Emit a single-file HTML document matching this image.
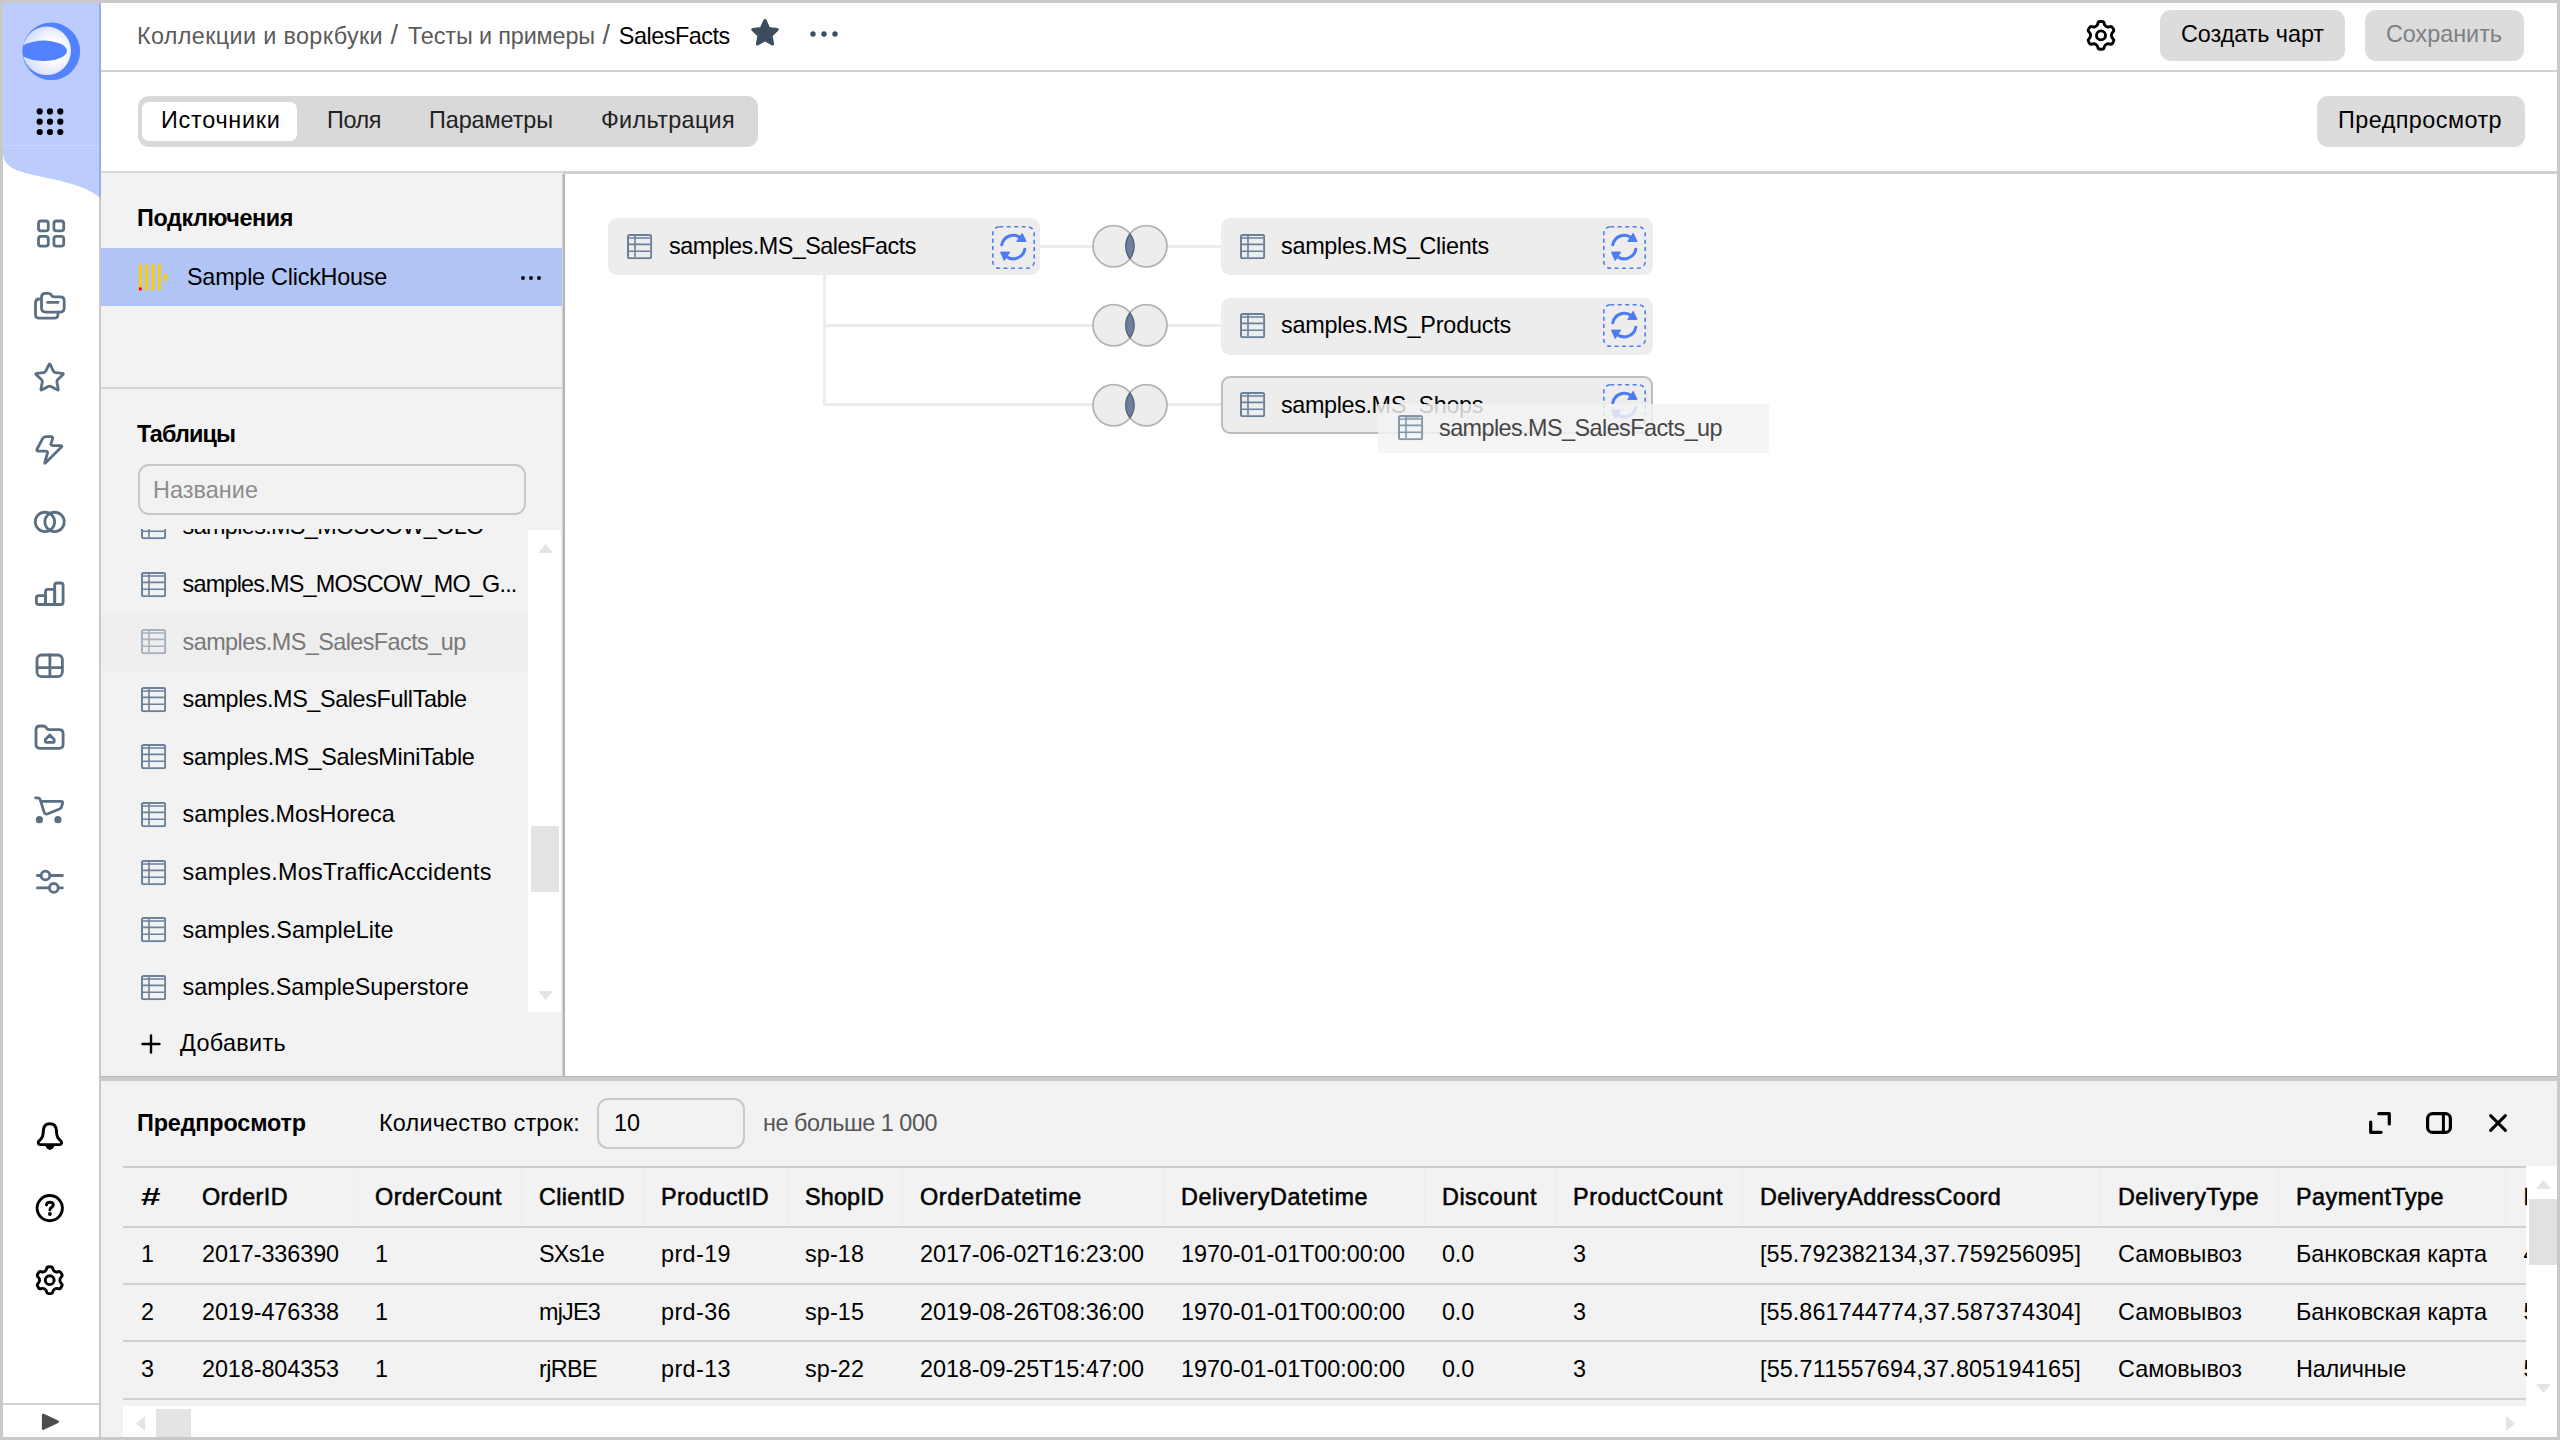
<!DOCTYPE html>
<html lang="ru">
<head>
<meta charset="utf-8">
<title>SalesFacts</title>
<style>
*{box-sizing:border-box;margin:0;padding:0}
html,body{width:2560px;height:1440px;overflow:hidden;background:#c9c9c9}
body{font-family:"Liberation Sans",sans-serif;font-size:23.4px;color:#000;position:relative}
.a{position:absolute}
.t{position:absolute;white-space:nowrap;line-height:30px;height:30px}
.b{font-weight:700}
.m{-webkit-text-stroke:0.55px #000}
.g{color:#5b5b5b}
svg{position:absolute;overflow:visible}
#aside{left:3px;top:3px;width:98px;height:1434px;background:#fff;border-right:2px solid #c9c9c9}
.si{left:34px;width:32px;height:32px;fill:none;stroke:#5b6f83;stroke-width:1.5;stroke-linecap:round;stroke-linejoin:round}
.sb{left:34px;width:32px;height:32px;fill:none;stroke:#000;stroke-width:1.5;stroke-linecap:round;stroke-linejoin:round}
.btn{background:#dcdcdc;border-radius:11px;height:51px}
.card{height:57px;width:432px;background:#ededed;border-radius:9px}
.ln{background:#ececec}
.hl{height:2px;background:#d1d1d1;left:123px;width:2403px}
.ti{width:25.2px;height:25.2px}
.rf{width:43px;height:43px}
</style>
</head>
<body>

<svg class="a" style="width:0;height:0;left:0;top:0"><defs>
  <symbol id="tbl" viewBox="0 0 25.2 25.2"><rect x="1" y="1" width="23.2" height="23.2" rx="1.6" fill="none" stroke="#6a8199" stroke-width="2"/><path d="M2 3.9H23.2" stroke="#6a8199" stroke-width="1.5" fill="none"/><path d="M8 2V23.2M2 10.4H23.2M2 17.3H23.2" stroke="#6a8199" stroke-width="1.6" fill="none"/></symbol>
  <symbol id="rfr" viewBox="0 0 43 43"><rect x="0.8" y="0.8" width="41.4" height="41.4" rx="6.5" fill="none" stroke="#4f7df0" stroke-width="1.6" stroke-dasharray="4 3.45"/><g fill="none" stroke="#4d7cf0" stroke-width="3.1" stroke-linecap="round"><path d="M9.8 18.8A11.7 11.7 0 0 1 28.7 12"/><path d="M32.8 23.2A11.7 11.7 0 0 1 13.7 30"/></g><path d="M30.2 7.3L34.1 15.4H24.7Z" fill="#4d7cf0" stroke="#4d7cf0" stroke-width="1" stroke-linejoin="round"/><path d="M12.2 34.5L8.5 26.1H17.8Z" fill="#4d7cf0" stroke="#4d7cf0" stroke-width="1" stroke-linejoin="round"/></symbol>
  <symbol id="venn" viewBox="0 0 78 46"><circle cx="22.6" cy="23.3" r="20.6" fill="#ededed" stroke="#b3b3b3" stroke-width="1.8"/><circle cx="55.4" cy="23.3" r="20.6" fill="#ededed" stroke="#b3b3b3" stroke-width="1.8"/><path d="M39 10.8A20.6 20.6 0 0 1 39 35.8A20.6 20.6 0 0 1 39 10.8Z" fill="#6b8199" stroke="#4c6078" stroke-width="1.2"/></symbol>
</defs></svg>

<!-- SIDEBAR -->
<div class="a" id="aside"></div>
<svg class="a" style="left:0;top:0;width:101px;height:1440px" viewBox="0 0 101 1440">
<path d="M3 3H99V197C86 186 62 181 38 176C14 171 3 166 3 152Z" fill="#bbccfd"/>
<rect x="3" y="145" width="96" height="1" fill="#c9d6fb"/>
<rect x="99" y="3" width="2" height="194" fill="#9eadd8"/>
<defs>
<radialGradient id="lg" cx="0.62" cy="0.5" r="0.62"><stop offset="0.35" stop-color="#fff"/><stop offset="1" stop-color="#cfdafe"/></radialGradient>
<clipPath id="lc"><circle cx="51.3" cy="51.3" r="28.8"/></clipPath>
</defs>
<circle cx="51.3" cy="51.3" r="28.8" fill="#5282ff"/>
<g clip-path="url(#lc)"><circle cx="46.8" cy="50.8" r="24.2" fill="url(#lg)"/><ellipse cx="43.5" cy="50.8" rx="23.5" ry="10.2" fill="#5282ff"/></g>
<g fill="#000"><circle cx="39.7" cy="111.4" r="3.1"/><circle cx="50" cy="111.4" r="3.1"/><circle cx="60.3" cy="111.4" r="3.1"/><circle cx="39.7" cy="121.7" r="3.1"/><circle cx="50" cy="121.7" r="3.1"/><circle cx="60.3" cy="121.7" r="3.1"/><circle cx="39.7" cy="132" r="3.1"/><circle cx="50" cy="132" r="3.1"/><circle cx="60.3" cy="132" r="3.1"/></g>
<g fill="none" stroke="#5b6f83" stroke-width="2.8" stroke-linecap="round" stroke-linejoin="round">
<rect x="38.5" y="221" width="9.8" height="9.8" rx="2.4"/>
<rect x="38.5" y="236.4" width="9.8" height="9.8" rx="2.4"/>
<rect x="53.9" y="221" width="9.8" height="9.8" rx="2.4"/>
<rect x="53.9" y="236.4" width="9.8" height="9.8" rx="2.4"/>
<path d="M41.5 308.1V297.3Q41.5 293.3 45.5 293.3H48.3Q50 293.3 51 294.6L52 295.9Q52.8 296.9 54.2 296.9H60.2Q64.2 296.9 64.2 300.9V308.1Q64.2 312.1 60.2 312.1H45.5Q41.5 312.1 41.5 308.1Z"/>
<path d="M41.5 299H39.5Q35.5 299 35.5 303V314.2Q35.5 318.2 39.5 318.2H54Q58 318.2 58 314.2V312.1"/>
<path d="M47.6 302.4H58"/>
<path d="M48.92 364.55Q49.60 363.10 50.28 364.55L53.27 370.87Q53.95 372.31 55.54 372.52L62.47 373.40Q64.06 373.60 62.89 374.70L57.80 379.49Q56.64 380.59 56.94 382.16L58.24 389.03Q58.53 390.60 57.13 389.83L51.00 386.47Q49.60 385.70 48.20 386.47L42.07 389.83Q40.67 390.60 40.96 389.03L42.26 382.16Q42.56 380.59 41.40 379.49L36.31 374.70Q35.14 373.60 36.73 373.40L43.66 372.52Q45.25 372.31 45.93 370.87Z"/>
<path d="M42.48 438.82Q43.60 436.70 46.00 436.70L50.90 436.70Q53.30 436.70 52.53 438.97L51.07 443.33Q50.30 445.60 52.70 445.60L60.50 445.60Q62.90 445.60 61.20 447.30L45.90 462.60Q44.20 464.30 44.88 462.00L47.42 453.40Q48.10 451.10 45.70 451.10L38.40 451.10Q36.00 451.10 37.12 448.98Z"/>
<circle cx="44.95" cy="521.9" r="9.65"/><circle cx="54.55" cy="521.9" r="9.65"/>
<path d="M36.4 598Q36.4 595.7 38.7 595.7H45.5V604.5H38.7Q36.4 604.5 36.4 602.2Z"/>
<path d="M45.5 591.7Q45.5 589.4 47.8 589.4H54.7V604.5H45.5Z"/>
<path d="M54.7 585.3Q54.7 583 57 583H60.8Q63.1 583 63.1 585.3V602.2Q63.1 604.5 60.8 604.5H54.7Z"/>
<rect x="37" y="655" width="25.35" height="21.7" rx="4.6"/><path d="M49.9 655V676.7M37 667.6H62.35"/>
<path d="M36 744.3V730Q36 726 40 726H43.2Q44.9 726 45.9 727.3L46.9 728.6Q47.7 729.6 49.1 729.6H59.1Q63.1 729.6 63.1 733.6V744.3Q63.1 748.3 59.1 748.3H40Q36 748.3 36 744.3Z"/>
<path d="M49.8 734.9L45.4 739.4V741.4Q45.4 742.4 46.4 742.4H53.2Q54.2 742.4 54.2 741.4V739.4Z"/>
<path d="M35.5 797.8H37.5Q39.6 797.8 40.3 799.9L44 811.8Q45 814.9 47.9 813.8L59.5 809Q61.2 808.2 61.7 806.5L62.5 803.4Q63.1 801.4 61.1 801.4H41.2"/>
<circle cx="39.4" cy="819.7" r="2.2" fill="#5b6f83"/><circle cx="57.9" cy="819.7" r="2.2" fill="#5b6f83"/>
<circle cx="45.5" cy="875.5" r="4.4"/><circle cx="53.8" cy="887.9" r="4.4"/>
<path d="M37.4 875.5H41M50 875.5H62.4M37.4 887.9H49.3M58.3 887.9H62.4"/>
</g>
<g fill="none" stroke="#000" stroke-width="2.9" stroke-linecap="round" stroke-linejoin="round">
<path d="M49.9 1123.7C45.5 1123.7 43.6 1127 43.4 1130.5L43 1134.5C42.8 1136.5 42 1138 40.5 1139.5L38.8 1141.3C37.5 1142.7 38.4 1144.6 40.2 1144.6H59.6C61.4 1144.6 62.3 1142.7 61 1141.3L59.3 1139.5C57.8 1138 57 1136.5 56.8 1134.5L56.4 1130.5C56.2 1127 54.3 1123.7 49.9 1123.7Z"/>
<path d="M47.2 1146.4Q49.9 1150.6 52.6 1146.4Z" fill="#000"/>
<circle cx="49.75" cy="1208.1" r="12.65"/>
<path d="M46.5 1205.1C46.5 1203.3 48 1202.3 49.9 1202.3C51.8 1202.3 53.3 1203.4 53.3 1205C53.3 1207.3 49.9 1207.3 49.9 1210"/>
<circle cx="49.9" cy="1214" r="1.9" fill="#000" stroke="none"/>
<path d="M54.70 1271.37Q53.22 1270.52 52.82 1268.87L52.71 1268.40Q52.31 1266.75 50.61 1266.75L48.79 1266.75Q47.09 1266.75 46.69 1268.40L46.58 1268.87Q46.18 1270.52 44.70 1271.37L44.55 1271.46Q43.08 1272.31 41.45 1271.83L40.99 1271.69Q39.36 1271.21 38.51 1272.68L37.60 1274.27Q36.75 1275.74 37.98 1276.91L38.32 1277.24Q39.56 1278.41 39.56 1280.11L39.56 1280.29Q39.56 1281.99 38.32 1283.16L37.98 1283.49Q36.75 1284.66 37.60 1286.13L38.51 1287.72Q39.36 1289.19 40.99 1288.71L41.45 1288.57Q43.08 1288.09 44.55 1288.94L44.70 1289.03Q46.18 1289.88 46.58 1291.53L46.69 1292.00Q47.09 1293.65 48.79 1293.65L50.61 1293.65Q52.31 1293.65 52.71 1292.00L52.82 1291.53Q53.22 1289.88 54.70 1289.03L54.85 1288.94Q56.32 1288.09 57.95 1288.57L58.41 1288.71Q60.04 1289.19 60.89 1287.72L61.80 1286.13Q62.65 1284.66 61.42 1283.49L61.08 1283.16Q59.84 1281.99 59.84 1280.29L59.84 1280.11Q59.84 1278.41 61.08 1277.24L61.42 1276.91Q62.65 1275.74 61.80 1274.27L60.89 1272.68Q60.04 1271.21 58.41 1271.69L57.95 1271.83Q56.32 1272.31 54.85 1271.46Z"/><circle cx="49.7" cy="1280.2" r="4.4"/>
</g>
<rect x="3" y="1403" width="96" height="2" fill="#d3d3d3"/>
<path d="M43.2 1415L57.6 1421.8L43.2 1428.6Z" fill="#4d4d4d" stroke="#4d4d4d" stroke-width="2.6" stroke-linejoin="round"/>
</svg>

<!-- TOPBAR -->
<div class="a" style="left:101px;top:3px;width:2456px;height:67px;background:#fff"></div>
<div class="a" style="left:101px;top:70px;width:2456px;height:2px;background:#d2d2d2"></div>
<svg class="a" style="left:748.7px;top:16.6px;width:32px;height:32px" viewBox="0 0 16 16"><path d="M8 1.9L9.8 5.8L14 6.3L10.9 9.2L11.7 13.4L8 11.3L4.3 13.4L5.1 9.2L2 6.3L6.2 5.8Z" fill="#3d4c5f" stroke="#3d4c5f" stroke-width="1.7" stroke-linejoin="round"/></svg>
<svg class="a" style="left:808px;top:28px;width:32px;height:12px" viewBox="0 0 32 12"><g fill="#3d4c5f"><circle cx="5" cy="6" r="2.7"/><circle cx="16" cy="6" r="2.7"/><circle cx="27" cy="6" r="2.7"/></g></svg>
<svg class="a" style="left:0;top:0;width:2560px;height:72px;fill:none;stroke:#000;stroke-width:2.9;stroke-linejoin:round" viewBox="0 0 2560 72"><path d="M2106.10 26.29Q2104.63 25.44 2104.23 23.79L2104.09 23.21Q2103.69 21.56 2101.99 21.56L2100.01 21.56Q2098.31 21.56 2097.91 23.21L2097.77 23.79Q2097.37 25.44 2095.90 26.29L2095.66 26.43Q2094.19 27.28 2092.56 26.80L2091.99 26.63Q2090.36 26.15 2089.51 27.62L2088.52 29.34Q2087.67 30.81 2088.90 31.98L2089.33 32.39Q2090.56 33.56 2090.56 35.26L2090.56 35.54Q2090.56 37.24 2089.33 38.41L2088.90 38.82Q2087.67 39.99 2088.52 41.46L2089.51 43.18Q2090.36 44.65 2091.99 44.17L2092.56 44.00Q2094.19 43.52 2095.66 44.37L2095.90 44.51Q2097.37 45.36 2097.77 47.01L2097.91 47.59Q2098.31 49.24 2100.01 49.24L2101.99 49.24Q2103.69 49.24 2104.09 47.59L2104.23 47.01Q2104.63 45.36 2106.10 44.51L2106.34 44.37Q2107.81 43.52 2109.44 44.00L2110.01 44.17Q2111.64 44.65 2112.49 43.18L2113.48 41.46Q2114.33 39.99 2113.10 38.82L2112.67 38.41Q2111.44 37.24 2111.44 35.54L2111.44 35.26Q2111.44 33.56 2112.67 32.39L2113.10 31.98Q2114.33 30.81 2113.48 29.34L2112.49 27.62Q2111.64 26.15 2110.01 26.63L2109.44 26.80Q2107.81 27.28 2106.34 26.43Z"/><circle cx="2101" cy="35.4" r="4.5"/></svg>
<div class="a btn" style="left:2160px;top:9.7px;width:185px"></div>
<div class="a btn" style="left:2365px;top:9.7px;width:158.5px"></div>
<!-- TABBAR -->
<div class="a" style="left:101px;top:72px;width:2456px;height:99px;background:#fff"></div>
<div class="a" style="left:138px;top:96px;width:620px;height:51px;background:#d9d9d9;border-radius:11px"></div>
<div class="a" style="left:142px;top:102px;width:155px;height:39px;background:#fff;border-radius:7px"></div>
<div class="a btn" style="left:2317px;top:96px;width:208px"></div>
<div class="a" style="left:101px;top:171px;width:462px;height:2px;background:#d8d8d8"></div>
<div class="a" style="left:563px;top:171px;width:1994px;height:3px;background:#d0d0d0"></div>
<!-- LEFT PANEL -->
<div class="a" style="left:101px;top:173px;width:462px;height:904px;background:#f2f2f2"></div>
<div class="a" style="left:561px;top:174px;width:4px;height:903px;background:linear-gradient(90deg,#f2f2f2 0,#d6d6d6 40%,#b4b4b4 60%,#b4b4b4 100%)"></div>
<div class="a" style="left:101px;top:248px;width:461px;height:58px;background:#b1c4f6"></div>
<svg class="a" style="left:138px;top:264px;width:30px;height:27px" viewBox="0 0 30 27"><g fill="#fc0"><rect x="0.9" y="0.4" width="2.9" height="26"/><rect x="7.2" y="0.4" width="2.9" height="26"/><rect x="13.5" y="0.4" width="2.9" height="26"/><rect x="19.9" y="0.4" width="2.9" height="26"/><rect x="26.2" y="10" width="2.9" height="7"/></g><rect x="0.9" y="23.4" width="2.9" height="3" fill="#f00"/></svg>
<svg class="a" style="left:519px;top:272.7px;width:24px;height:10px" viewBox="0 0 24 10"><g fill="#000"><circle cx="4" cy="5" r="2"/><circle cx="12" cy="5" r="2"/><circle cx="20" cy="5" r="2"/></g></svg>
<div class="a" style="left:101px;top:386.5px;width:461px;height:2px;background:#d6d6d6"></div>

<!-- CANVAS -->
<div class="a" style="left:565px;top:174px;width:1992px;height:903px;background:#fff"></div>
<div class="a ln" style="left:1040px;top:245px;width:181px;height:3px"></div>
<div class="a ln" style="left:823px;top:275px;width:3px;height:131px"></div>
<div class="a ln" style="left:823px;top:324px;width:398px;height:3px"></div>
<div class="a ln" style="left:823px;top:403px;width:398px;height:3px"></div>
<div class="a card" style="left:608px;top:218px"></div>
<div class="a card" style="left:1221px;top:218px"></div>
<div class="a card" style="left:1221px;top:298px"></div>
<div class="a card" style="left:1221px;top:376px;height:58px;border:2px solid #bcbcbc"></div>
<svg class="a ti" style="left:627px;top:234px"><use href="#tbl"/></svg>
<svg class="a ti" style="left:1240px;top:234px"><use href="#tbl"/></svg>
<svg class="a ti" style="left:1240px;top:313px"><use href="#tbl"/></svg>
<svg class="a ti" style="left:1240px;top:392px"><use href="#tbl"/></svg>
<svg class="a rf" style="left:992px;top:226px"><use href="#rfr"/></svg>
<svg class="a rf" style="left:1603px;top:226px"><use href="#rfr"/></svg>
<svg class="a rf" style="left:1603px;top:304px"><use href="#rfr"/></svg>
<svg class="a rf" style="left:1603px;top:384px"><use href="#rfr"/></svg>
<svg class="a" style="left:1091px;top:223px;width:78px;height:46px"><use href="#venn"/></svg>
<svg class="a" style="left:1091px;top:302px;width:78px;height:46px"><use href="#venn"/></svg>
<svg class="a" style="left:1091px;top:382px;width:78px;height:46px"><use href="#venn"/></svg>

<!-- LEFT LIST -->
<div class="a" style="left:138px;top:464.4px;width:388px;height:51px;border:2px solid #c8c8c8;border-radius:11px"></div>
<div class="a" style="left:101px;top:613px;width:427px;height:58px;background:#eee"></div>
<div class="a" style="left:528px;top:530px;width:33px;height:482px;background:#fff"></div>
<div class="a" style="left:531px;top:826px;width:28px;height:66px;background:#e3e3e3"></div>
<svg class="a" style="left:538px;top:544px;width:15px;height:9px" viewBox="0 0 15 9"><path d="M0 9L7.5 0L15 9Z" fill="#e4e4e4"/></svg>
<svg class="a" style="left:538px;top:991px;width:15px;height:9px" viewBox="0 0 15 9"><path d="M0 0L7.5 9L15 0Z" fill="#e4e4e4"/></svg>
<svg class="a" style="left:141px;top:1034px;width:20px;height:20px;fill:none;stroke:#000;stroke-width:2.4;stroke-linecap:round" viewBox="0 0 20 20"><path d="M10 1.5V18.5M1.5 10H18.5"/></svg>

<div class="a" style="left:101px;top:528.5px;width:427px;height:483.5px;overflow:hidden">
<svg class="a ti" style="left:40px;top:-14.6px"><use href="#tbl"/></svg>
<span class="t" style="left:81.6px;top:-17.1px;letter-spacing:-0.645px;">samples.MS_MOSCOW_OLO</span>
<svg class="a ti" style="left:40px;top:43px"><use href="#tbl"/></svg>
<span class="t" style="left:81.6px;top:40.5px;letter-spacing:-0.781px;">samples.MS_MOSCOW_MO_G...</span>
<svg class="a ti" style="left:40px;top:100.6px;opacity:.55"><use href="#tbl"/></svg>
<span class="t" style="left:81.6px;top:98.1px;letter-spacing:-0.559px;color:#787878">samples.MS_SalesFacts_up</span>
<svg class="a ti" style="left:40px;top:158.2px"><use href="#tbl"/></svg>
<span class="t" style="left:81.6px;top:155.7px;letter-spacing:-0.393px;">samples.MS_SalesFullTable</span>
<svg class="a ti" style="left:40px;top:215.8px"><use href="#tbl"/></svg>
<span class="t" style="left:81.6px;top:213.3px;letter-spacing:-0.281px;">samples.MS_SalesMiniTable</span>
<svg class="a ti" style="left:40px;top:273.4px"><use href="#tbl"/></svg>
<span class="t" style="left:81.6px;top:270.9px;letter-spacing:-0.071px;">samples.MosHoreca</span>
<svg class="a ti" style="left:40px;top:331px"><use href="#tbl"/></svg>
<span class="t" style="left:81.6px;top:328.5px;letter-spacing:0.226px;">samples.MosTrafficAccidents</span>
<svg class="a ti" style="left:40px;top:388.6px"><use href="#tbl"/></svg>
<span class="t" style="left:81.6px;top:386.1px;letter-spacing:0.021px;">samples.SampleLite</span>
<svg class="a ti" style="left:40px;top:446.2px"><use href="#tbl"/></svg>
<span class="t" style="left:81.6px;top:443.7px;letter-spacing:-0.055px;">samples.SampleSuperstore</span>
</div>
<!-- BOTTOM PANEL -->
<div class="a" style="left:101px;top:1076px;width:2456px;height:5px;background:linear-gradient(180deg,#b9b9b9 0,#b9b9b9 25%,#cbcbcb 26%,#cbcbcb 100%)"></div>
<div class="a" style="left:101px;top:1081px;width:2456px;height:356px;background:#f2f2f2"></div>
<div class="a" style="left:597px;top:1097.6px;width:148.4px;height:51px;border:2px solid #c8c8c8;border-radius:11px"></div>
<svg class="a" style="left:2368px;top:1111px;width:24px;height:24px;fill:none;stroke:#000;stroke-width:3.2;stroke-linecap:round;stroke-linejoin:round" viewBox="0 0 24 24"><path d="M10.8 2.7H21.3V13"/><path d="M2.7 11V21.3H13"/></svg>
<svg class="a" style="left:2425px;top:1111px;width:28px;height:24px;fill:none;stroke:#000;stroke-width:3.2;stroke-linejoin:round" viewBox="0 0 28 24"><rect x="2.6" y="2.6" width="22.8" height="18.8" rx="5"/><path d="M18.4 2.6V21.4" stroke-width="3"/></svg>
<svg class="a" style="left:2488px;top:1113px;width:20px;height:20px;fill:none;stroke:#000;stroke-width:3;stroke-linecap:round" viewBox="0 0 20 20"><path d="M2.6 2.6L17.4 17.4M17.4 2.6L2.6 17.4"/></svg>
<!-- table lines -->
<div class="a hl" style="top:1166px;background:#cdcdcd"></div>
<div class="a hl" style="top:1225.6px"></div>
<div class="a hl" style="top:1283px"></div>
<div class="a hl" style="top:1340.4px"></div>
<div class="a hl" style="top:1398px"></div>
<div class="a" style="left:356.5px;top:1168px;width:1px;height:57px;background:#ededed"></div>
<div class="a" style="left:521px;top:1168px;width:1px;height:57px;background:#ededed"></div>
<div class="a" style="left:643px;top:1168px;width:1px;height:57px;background:#ededed"></div>
<div class="a" style="left:787px;top:1168px;width:1px;height:57px;background:#ededed"></div>
<div class="a" style="left:902px;top:1168px;width:1px;height:57px;background:#ededed"></div>
<div class="a" style="left:1163px;top:1168px;width:1px;height:57px;background:#ededed"></div>
<div class="a" style="left:1424px;top:1168px;width:1px;height:57px;background:#ededed"></div>
<div class="a" style="left:1555px;top:1168px;width:1px;height:57px;background:#ededed"></div>
<div class="a" style="left:1742px;top:1168px;width:1px;height:57px;background:#ededed"></div>
<div class="a" style="left:2100px;top:1168px;width:1px;height:57px;background:#ededed"></div>
<div class="a" style="left:2278px;top:1168px;width:1px;height:57px;background:#ededed"></div>
<div class="a" style="left:2505px;top:1168px;width:1px;height:57px;background:#ededed"></div>
<!-- table v scrollbar -->
<div class="a" style="left:2526px;top:1166px;width:31px;height:240px;background:#fff"></div>
<div class="a" style="left:2529px;top:1199px;width:28px;height:66px;background:#e1e1e1"></div>
<svg class="a" style="left:2536px;top:1180px;width:15px;height:9px" viewBox="0 0 15 9"><path d="M0 9L7.5 0L15 9Z" fill="#e4e4e4"/></svg>
<svg class="a" style="left:2536px;top:1383.8px;width:15px;height:9px" viewBox="0 0 15 9"><path d="M0 0L7.5 9L15 0Z" fill="#e4e4e4"/></svg>
<!-- table h scrollbar -->
<div class="a" style="left:123px;top:1405.6px;width:2434px;height:31.4px;background:#fff"></div>
<div class="a" style="left:156px;top:1409px;width:35px;height:28px;background:#e4e4e4"></div>
<svg class="a" style="left:136px;top:1416px;width:9px;height:15px" viewBox="0 0 9 15"><path d="M9 0L0 7.5L9 15Z" fill="#e4e4e4"/></svg>
<svg class="a" style="left:2506px;top:1416px;width:9px;height:15px" viewBox="0 0 9 15"><path d="M0 0L9 7.5L0 15Z" fill="#e4e4e4"/></svg>

<span class="t g" style="left:137px;top:20.5px;letter-spacing:0.347px;">Коллекции и воркбуки</span>
<span class="t g" style="left:390.5px;top:20px;font-size:27px">/</span>
<span class="t g" style="left:408px;top:20.5px;letter-spacing:-0.128px;">Тесты и примеры</span>
<span class="t g" style="left:602.5px;top:20px;font-size:27px">/</span>
<span class="t" style="left:618.8px;top:20.5px;letter-spacing:-0.470px;">SalesFacts</span>
<span class="t" style="left:2181px;top:19px;letter-spacing:-0.066px;">Создать чарт</span>
<span class="t" style="left:2386px;top:19px;letter-spacing:-0.026px;color:#7c8087">Сохранить</span>
<span class="t" style="left:161px;top:105px;letter-spacing:0.731px;">Источники</span>
<span class="t" style="left:327px;top:105px;letter-spacing:-0.406px;color:#222">Поля</span>
<span class="t" style="left:429px;top:105px;letter-spacing:-0.076px;color:#222">Параметры</span>
<span class="t" style="left:601px;top:105px;letter-spacing:0.328px;color:#222">Фильтрация</span>
<span class="t" style="left:2338px;top:105px;letter-spacing:0.447px;">Предпросмотр</span>
<span class="t b" style="left:137px;top:203px;letter-spacing:-0.393px;">Подключения</span>
<span class="t" style="left:187px;top:262px;letter-spacing:-0.242px;">Sample ClickHouse</span>
<span class="t b" style="left:137px;top:419px;letter-spacing:-0.884px;">Таблицы</span>
<span class="t" style="left:153px;top:475px;letter-spacing:0.059px;color:#8c8c8c">Название</span>
<span class="t" style="left:180px;top:1028px;letter-spacing:0.328px;">Добавить</span>
<span class="t" style="left:669px;top:231px;letter-spacing:-0.495px;">samples.MS_SalesFacts</span>
<span class="t" style="left:1281px;top:231px;letter-spacing:-0.289px;">samples.MS_Clients</span>
<span class="t" style="left:1281px;top:310px;letter-spacing:-0.211px;">samples.MS_Products</span>
<span class="t" style="left:1281px;top:390px;letter-spacing:-0.376px;">samples.MS_Shops</span>
<span class="t b" style="left:137px;top:1108px;letter-spacing:-0.151px;">Предпросмотр</span>
<span class="t" style="left:379px;top:1108px;letter-spacing:0.219px;">Количество строк:</span>
<span class="t" style="left:614px;top:1108px;">10</span>
<span class="t" style="left:763px;top:1108px;letter-spacing:-0.465px;color:#555">не больше 1 000</span>
<span class="t b" style="left:141px;top:1182px;display:inline-block;transform:scaleX(1.5);transform-origin:0 50%;font-weight:700">#</span>
<span class="t m" style="left:202px;top:1182px;letter-spacing:0.402px;">OrderID</span>
<span class="t m" style="left:375px;top:1182px;letter-spacing:0.478px;">OrderCount</span>
<span class="t m" style="left:539px;top:1182px;letter-spacing:0.350px;">ClientID</span>
<span class="t m" style="left:661px;top:1182px;letter-spacing:0.443px;">ProductID</span>
<span class="t m" style="left:805px;top:1182px;letter-spacing:0.161px;">ShopID</span>
<span class="t m" style="left:920px;top:1182px;letter-spacing:0.662px;">OrderDatetime</span>
<span class="t m" style="left:1181px;top:1182px;letter-spacing:0.557px;">DeliveryDatetime</span>
<span class="t m" style="left:1442px;top:1182px;letter-spacing:0.498px;">Discount</span>
<span class="t m" style="left:1573px;top:1182px;letter-spacing:0.581px;">ProductCount</span>
<span class="t m" style="left:1760px;top:1182px;letter-spacing:0.350px;">DeliveryAddressCoord</span>
<span class="t m" style="left:2118px;top:1182px;letter-spacing:0.483px;">DeliveryType</span>
<span class="t m" style="left:2296px;top:1182px;letter-spacing:0.452px;">PaymentType</span>
<span class="t" style="left:141px;top:1239px;">1</span>
<span class="t" style="left:202px;top:1239px;letter-spacing:-0.081px;">2017-336390</span>
<span class="t" style="left:375px;top:1239px;">1</span>
<span class="t" style="left:539px;top:1239px;letter-spacing:-0.784px;">SXs1e</span>
<span class="t" style="left:661px;top:1239px;letter-spacing:0.396px;">prd-19</span>
<span class="t" style="left:805px;top:1239px;letter-spacing:0.097px;">sp-18</span>
<span class="t" style="left:920px;top:1239px;letter-spacing:-0.053px;">2017-06-02T16:23:00</span>
<span class="t" style="left:1181px;top:1239px;letter-spacing:-0.053px;">1970-01-01T00:00:00</span>
<span class="t" style="left:1442px;top:1239px;letter-spacing:-0.177px;">0.0</span>
<span class="t" style="left:1573px;top:1239px;">3</span>
<span class="t" style="left:1760px;top:1239px;letter-spacing:0.086px;">[55.792382134,37.759256095]</span>
<span class="t" style="left:2118px;top:1239px;letter-spacing:-0.016px;">Самовывоз</span>
<span class="t" style="left:2296px;top:1239px;letter-spacing:-0.018px;">Банковская карта</span>
<span class="t" style="left:141px;top:1297px;">2</span>
<span class="t" style="left:202px;top:1297px;letter-spacing:-0.081px;">2019-476338</span>
<span class="t" style="left:375px;top:1297px;">1</span>
<span class="t" style="left:539px;top:1297px;letter-spacing:-0.800px;">mjJE3</span>
<span class="t" style="left:661px;top:1297px;letter-spacing:0.396px;">prd-36</span>
<span class="t" style="left:805px;top:1297px;letter-spacing:0.097px;">sp-15</span>
<span class="t" style="left:920px;top:1297px;letter-spacing:-0.053px;">2019-08-26T08:36:00</span>
<span class="t" style="left:1181px;top:1297px;letter-spacing:-0.053px;">1970-01-01T00:00:00</span>
<span class="t" style="left:1442px;top:1297px;letter-spacing:-0.177px;">0.0</span>
<span class="t" style="left:1573px;top:1297px;">3</span>
<span class="t" style="left:1760px;top:1297px;letter-spacing:0.086px;">[55.861744774,37.587374304]</span>
<span class="t" style="left:2118px;top:1297px;letter-spacing:-0.016px;">Самовывоз</span>
<span class="t" style="left:2296px;top:1297px;letter-spacing:-0.018px;">Банковская карта</span>
<span class="t" style="left:141px;top:1354px;">3</span>
<span class="t" style="left:202px;top:1354px;letter-spacing:-0.081px;">2018-804353</span>
<span class="t" style="left:375px;top:1354px;">1</span>
<span class="t" style="left:539px;top:1354px;letter-spacing:-0.619px;">rjRBE</span>
<span class="t" style="left:661px;top:1354px;letter-spacing:0.396px;">prd-13</span>
<span class="t" style="left:805px;top:1354px;letter-spacing:0.097px;">sp-22</span>
<span class="t" style="left:920px;top:1354px;letter-spacing:-0.053px;">2018-09-25T15:47:00</span>
<span class="t" style="left:1181px;top:1354px;letter-spacing:-0.053px;">1970-01-01T00:00:00</span>
<span class="t" style="left:1442px;top:1354px;letter-spacing:-0.177px;">0.0</span>
<span class="t" style="left:1573px;top:1354px;">3</span>
<span class="t" style="left:1760px;top:1354px;letter-spacing:0.150px;">[55.711557694,37.805194165]</span>
<span class="t" style="left:2118px;top:1354px;letter-spacing:-0.016px;">Самовывоз</span>
<span class="t" style="left:2296px;top:1354px;letter-spacing:-0.193px;">Наличные</span>
<!-- DRAG GHOST -->
<div class="a" style="left:1378px;top:404px;width:391px;height:49px;background:rgba(243,243,243,0.83)"></div>
<svg class="a ti" style="left:1398px;top:415px;opacity:.8"><use href="#tbl"/></svg>

<span class="t" style="left:1439px;top:413px;letter-spacing:-0.559px;color:#333;opacity:.9">samples.MS_SalesFacts_up</span>
<div class="a" style="left:2505px;top:1168px;width:22px;height:230px;overflow:hidden">
<span class="t m" style="left:18.5px;top:14px">P</span>
<span class="t " style="left:18.5px;top:71px">4</span>
<span class="t " style="left:18.5px;top:129px">5</span>
<span class="t " style="left:18.5px;top:186px">5</span>
</div>
</body>
</html>
